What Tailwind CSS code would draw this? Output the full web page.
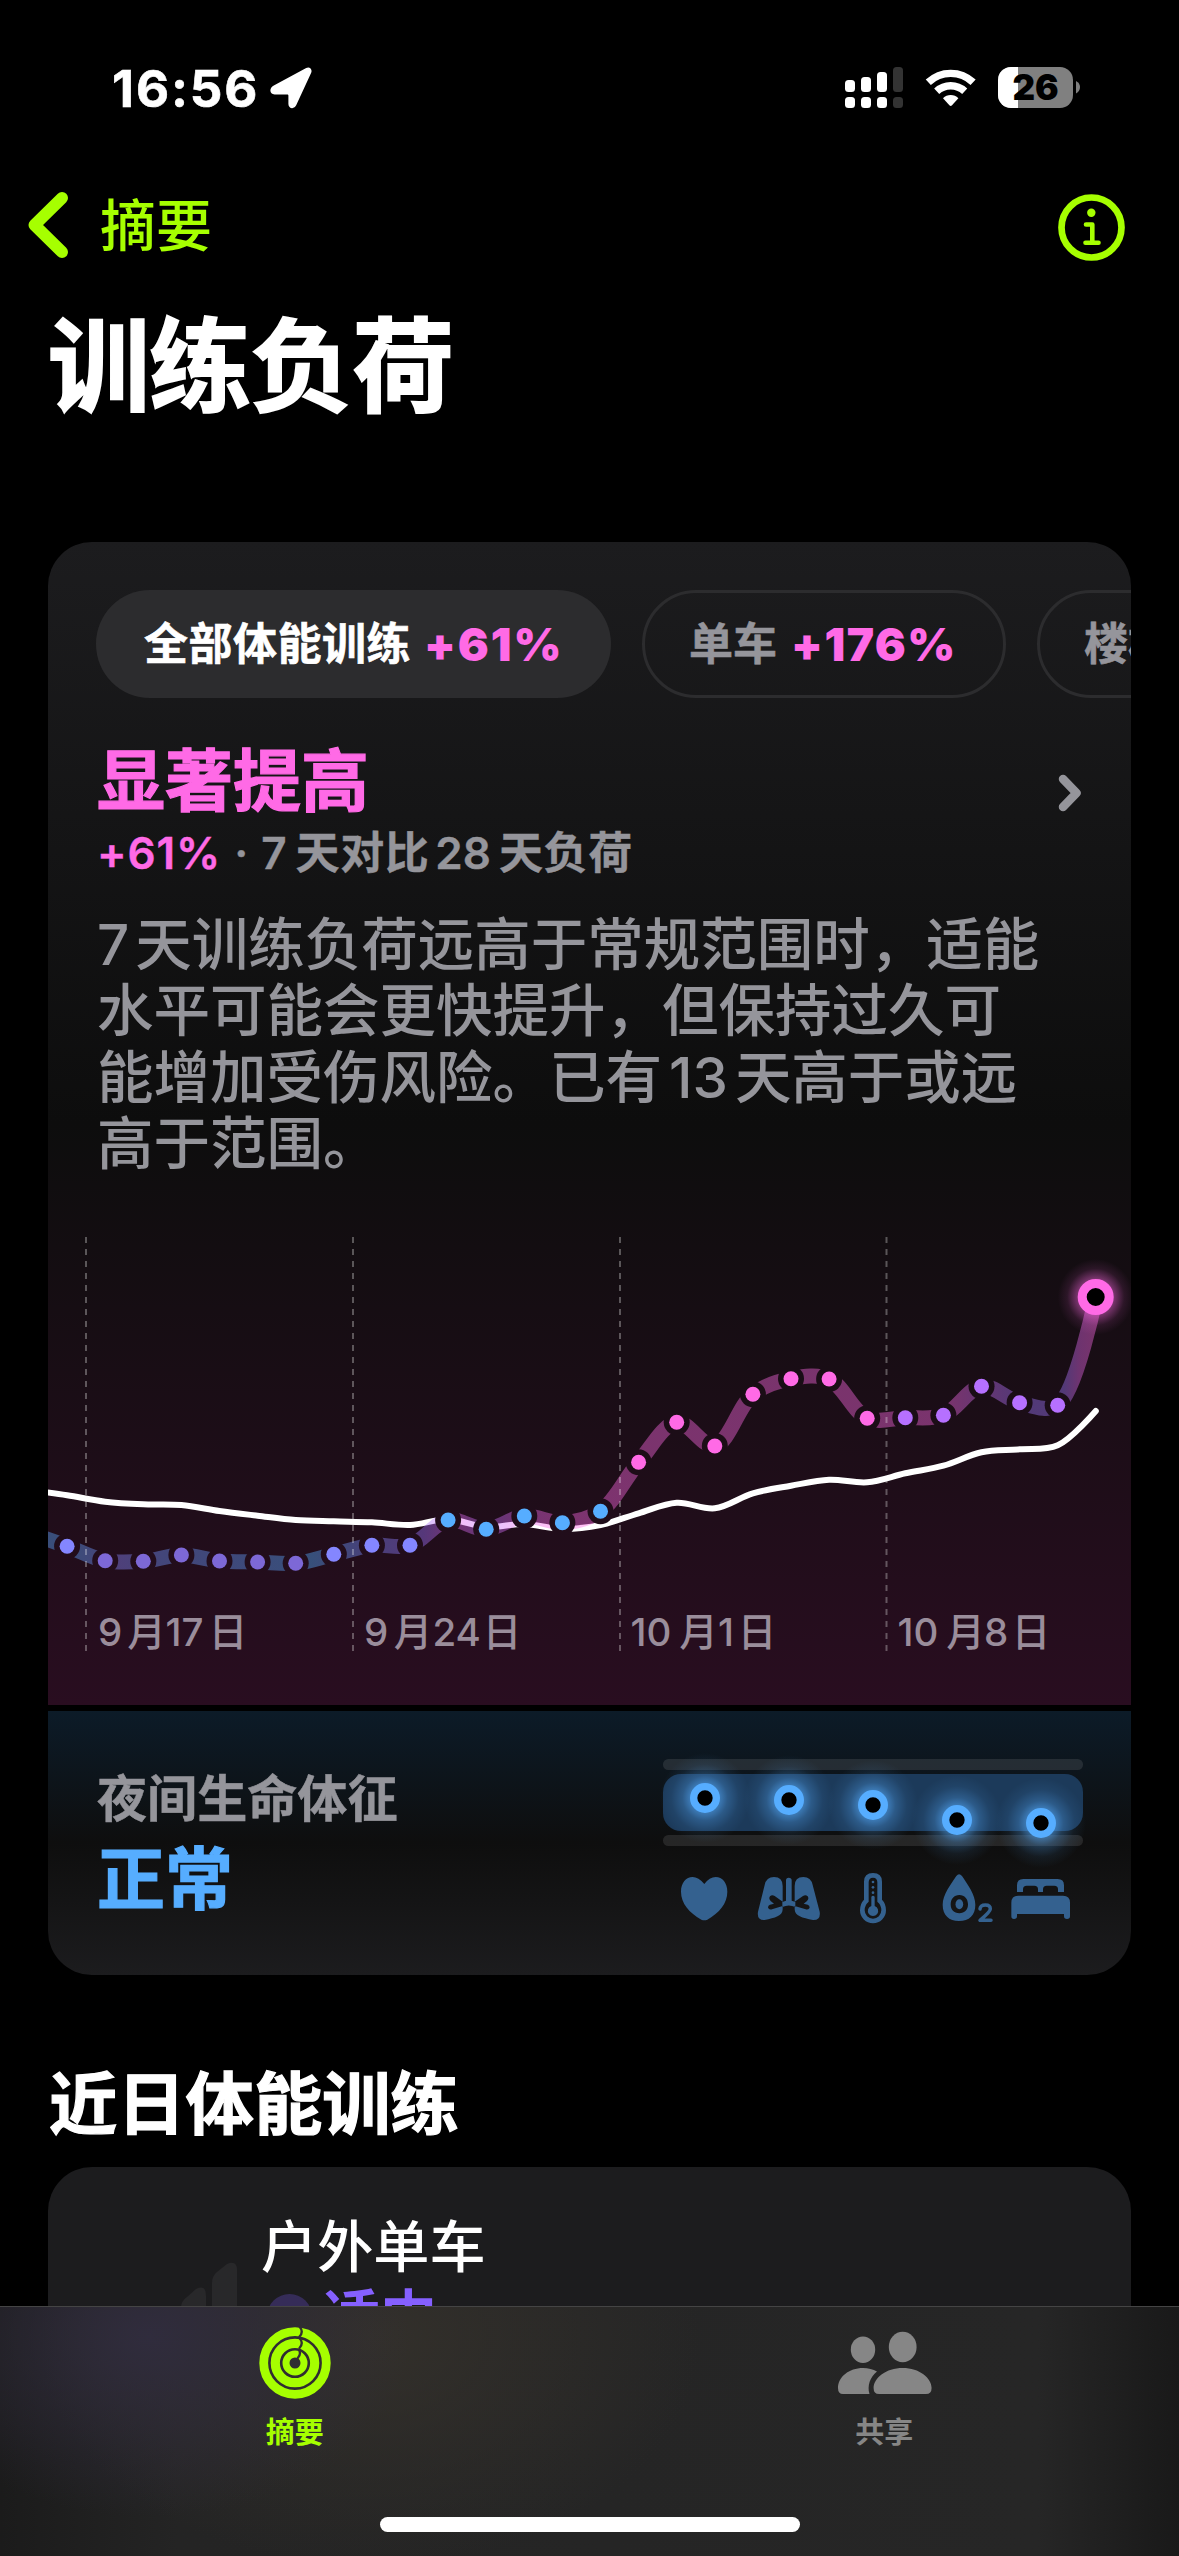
<!DOCTYPE html>
<html lang="zh-CN">
<head>
<meta charset="utf-8">
<title>训练负荷</title>
<script src="https://cdn.jsdelivr.net/npm/@tailwindcss/browser@4"></script>
</head>
<body class="bg-black">
<div class="relative flex h-[2556px] w-[1179px] flex-col overflow-hidden bg-black font-['Inter','Noto_Sans_CJK_SC',sans-serif] text-white">

  <!-- Status bar -->
  <div class="flex h-[176px] shrink-0 items-center pl-[112px] pr-[98px]">
    <span class="w-[158px] whitespace-nowrap text-[51px] font-bold leading-none tracking-[1.900px] [-webkit-text-stroke:0.6px]">16:56</span>
    <svg class="h-[42px] w-[42px]" viewBox="0 0 42 42" fill="#fff"><path d="M36.200.900 3.800 18.400C-1.300 21.200-.400 27.400 4.600 27.400H17.200C18 27.400 18.400 27.800 18.400 28.600V37C18.400 42 24.500 42.600 26.300 38.100L41.200 5.800C42.600 2.300 39.600-.900 36.200.900Z"/></svg>
    <svg class="ml-auto h-[42px] w-[236px]" viewBox="846 67 236 42">
      <g fill="#fff"><rect x="846" y="80" width="10" height="12" rx="3.500"/><rect x="862" y="77" width="10" height="15" rx="3.500"/><rect x="878" y="72" width="10" height="20" rx="3.500"/><rect x="846" y="97" width="10" height="11" rx="3.500"/><rect x="862" y="97" width="10" height="11" rx="3.500"/><rect x="878" y="97" width="10" height="11" rx="3.500"/></g>
      <g fill="#333"><rect x="894" y="67" width="10" height="25" rx="3.500"/><rect x="894" y="97" width="10" height="11" rx="3.500"/></g>
      <g fill="none" stroke="#fff" stroke-width="7.400"><path d="M929.300 82.300A32.500 32.500 0 0 1 974.100 82.300"/><path d="M937.700 91.300A20.500 20.500 0 0 1 965.700 91.300"/></g>
      <path fill="#fff" d="M944 98.200A11 11 0 0 1 959.400 98.200L953 105.300Q951.700 106.600 950.400 105.300Z"/>
      <clipPath id="bat"><rect x="999" y="67" width="75" height="41" rx="13"/></clipPath>
      <g clip-path="url(#bat)"><rect x="999" y="67" width="75" height="41" fill="#808080"/><rect x="999" y="67" width="20" height="41" fill="#fff"/></g>
      <path fill="#808080" d="M1077 81Q1081 83 1081 87T1077 93.500Z"/>
      <text x="1036.500" y="100.300" text-anchor="middle" class="text-[35px] font-black" fill="#000">26</text>
    </svg>
  </div>

  <!-- Navigation -->
  <div class="flex h-[98px] shrink-0 items-center pl-[28px] pr-[54px] text-[#a6ff00]">
    <svg class="h-[68px] w-[40px]" viewBox="0 0 40 68" fill="none" stroke="currentColor" stroke-width="12" stroke-linecap="round" stroke-linejoin="round"><path d="M34 7 6.500 34 34 61"/></svg>
    <span class="ml-[32px] mt-[2px] text-[56px] font-medium leading-none">摘要</span>
    <svg class="ml-auto mt-[5px] h-[67px] w-[67px]" viewBox="0 0 67 67"><circle cx="33.500" cy="33.500" r="30" fill="none" stroke="currentColor" stroke-width="6.700"/><circle cx="33.300" cy="18.800" r="4.200" fill="currentColor"/><path d="M28 30.500h6.300v18.300M27.500 48.800h13" fill="none" stroke="currentColor" stroke-width="4.600" stroke-linecap="round" stroke-linejoin="round"/></svg>
  </div>

  <h1 class="h-[181px] shrink-0 pl-[48px] pt-[3px] text-[102px] font-bold leading-[181px] tracking-[-0.700px] [-webkit-text-stroke:1.8px]">训练负荷</h1>

  <!-- Training load card -->
  <section class="mx-[48px] mt-[87px] flex h-[1163px] w-[1083px] shrink-0 flex-col overflow-hidden rounded-t-[44px] bg-[linear-gradient(180deg,#1c1c1e_0%,#0d0d0d_50%,#290d20_100%)]">
    <div class="flex shrink-0 gap-[31px] whitespace-nowrap pl-[48px] pt-[48px] text-[44px] font-bold leading-none">
      <div class="flex h-[108px] w-[515px] shrink-0 items-center gap-[13px] rounded-full bg-[#2c2c2e] pl-[48px]"><span class="tracking-[0.500px] [-webkit-text-stroke:0.6px]">全部体能训练</span><span class="text-[46px] font-black tracking-[1.900px] text-[#ff6ae6]">+61%</span></div>
      <div class="flex h-[108px] w-[364px] shrink-0 items-center gap-[14px] rounded-full border-[3px] border-[#2c2c2e] pl-[44px]"><span class="text-[#95959b] [-webkit-text-stroke:0.6px]">单车</span><span class="text-[46px] font-black tracking-[1.500px] text-[#ff6ae6]">+176%</span></div>
      <div class="flex h-[108px] w-[364px] shrink-0 items-center rounded-full border-[3px] border-[#2c2c2e] pl-[44px] text-[#95959b]"><span class="[-webkit-text-stroke:0.6px]">楼梯</span></div>
    </div>
    <div class="mt-[40px] flex h-[148px] shrink-0 items-center justify-between pl-[49px] pr-[49px]">
      <div>
        <h2 class="h-[82px] pt-[2px] text-[68px] font-bold leading-[82px] text-[#ff6ae6] [-webkit-text-stroke:1.2px]">显著提高</h2>
        <p class="flex h-[66px] items-center whitespace-nowrap text-[44px] font-semibold leading-[68px] text-[#95959b] [-webkit-text-stroke:0.4px]"><span class="tracking-[0.900px] text-[#ff6ae6]">+61%</span><span class="mx-[13px]">·</span><span>7</span><span class="ml-[9px] tracking-[0.600px]">天对比</span><span class="ml-[6px]">28</span><span class="ml-[8px] tracking-[0.600px]">天负荷</span></p>
      </div>
      <svg class="mb-[39px] h-[38px] w-[24px]" viewBox="0 0 24 38" fill="none" stroke="#95959b" stroke-width="8.500" stroke-linecap="round" stroke-linejoin="round"><path d="M5 5 18.500 19 5 33"/></svg>
    </div>
    <p class="mt-[26px] h-[263px] shrink-0 whitespace-nowrap pl-[49px] text-[56.500px] font-medium leading-[66.400px] text-[#95959b]">7<span class="ml-[6px]">天训练负荷远高于常规范围时，适能</span><br>水平可能会更快提升，但保持过久可<br>能增加受伤风险。已有<span class="ml-[7px] mr-[7px]">13</span>天高于或远<br>高于范围。</p>

    <!-- Chart -->
    <svg class="h-[530px] w-[1083px] shrink-0" viewBox="48 1175 1083 530">
      <defs>
        <linearGradient id="load" gradientUnits="userSpaceOnUse" x1="29" y1="0" x2="1095.700" y2="0">
          <stop offset="0" stop-color="#56adff"/><stop offset=".045" stop-color="#62a4ff"/><stop offset=".085" stop-color="#8c88ff"/><stop offset=".125" stop-color="#7296ff"/><stop offset=".2" stop-color="#659fff"/><stop offset=".265" stop-color="#56adff"/><stop offset=".32" stop-color="#8088ff"/><stop offset=".37" stop-color="#a074ff"/><stop offset=".4" stop-color="#e86aee"/><stop offset=".43" stop-color="#c070ff"/><stop offset=".46" stop-color="#e86aee"/><stop offset=".5" stop-color="#ff6ae6"/><stop offset=".86" stop-color="#ff6ae6"/><stop offset=".9" stop-color="#c870f8"/><stop offset=".93" stop-color="#a078ff"/><stop offset=".97" stop-color="#a078ff"/><stop offset=".985" stop-color="#e86aee"/><stop offset="1" stop-color="#ff6ae6"/>
        </linearGradient>
        <mask id="halo" maskUnits="userSpaceOnUse" x="0" y="1175" width="1179" height="530"><rect y="1175" width="1179" height="530" fill="#fff"/><g id="holes"></g></mask>
        <radialGradient id="pinkGlow"><stop offset=".3" stop-color="#ff6ae6" stop-opacity=".75"/><stop offset=".5" stop-color="#ff6ae6" stop-opacity=".4"/><stop offset=".75" stop-color="#ff6ae6" stop-opacity=".1"/><stop offset="1" stop-color="#ff6ae6" stop-opacity="0"/></radialGradient>
      </defs>
      <g mask="url(#halo)" fill="none">
        <path id="base" stroke="#fff" stroke-width="6" stroke-linecap="round"/>
        <path id="band" stroke="url(#load)" stroke-width="15" stroke-opacity=".42"/>
      </g>
      <g stroke="#fff" stroke-opacity=".3" stroke-width="2" stroke-dasharray="6 6"><path d="M86 1237V1651M353 1237V1651M620 1237V1651M886.500 1237V1651"/></g>
      <g id="dots"></g>
      <circle cx="1095.700" cy="1297" r="38" fill="url(#pinkGlow)"/>
      <circle cx="1095.700" cy="1297" r="13.500" fill="#000" stroke="#ff6ae6" stroke-width="9"/>
      <g class="text-[38.500px] font-medium" fill="#9a8d9b">
        <text y="1646.300"><tspan x="98">9</tspan><tspan x="127.200">月</tspan><tspan x="165.500">17</tspan><tspan x="208.700">日</tspan></text>
        <text y="1646.300"><tspan x="364">9</tspan><tspan x="393.700">月</tspan><tspan x="432.500">24</tspan><tspan x="482.700">日</tspan></text>
        <text y="1646.300"><tspan x="630.500">10</tspan><tspan x="679.200">月</tspan><tspan x="718">1</tspan><tspan x="737.700">日</tspan></text>
        <text y="1646.300"><tspan x="897.500">10</tspan><tspan x="946.200">月</tspan><tspan x="984">8</tspan><tspan x="1011.700">日</tspan></text>
      </g>
    </svg>
  </section>

  <!-- Overnight vitals -->
  <section class="mx-[48px] mt-[6px] flex h-[264px] w-[1083px] shrink-0 justify-between overflow-hidden rounded-b-[44px] bg-[linear-gradient(180deg,#0c1b28_0%,#0e0e0e_50%,#1c1c1e_100%)] pl-[49px] pr-[48px]">
    <div class="pt-[55px]">
      <p class="h-[66px] text-[50.100px] font-bold leading-[66px] text-[#95959b] [-webkit-text-stroke:0.5px]">夜间生命体征</p>
      <p class="h-[93px] text-[68px] font-bold leading-[94px] text-[#56adff] [-webkit-text-stroke:1.2px]">正常</p>
    </div>
    <svg class="mt-[39px] h-[180px] w-[420px] overflow-visible" viewBox="69 60 1260 540">
      <defs><radialGradient id="blueGlow"><stop offset=".3" stop-color="#56adff" stop-opacity=".6"/><stop offset=".5" stop-color="#56adff" stop-opacity=".28"/><stop offset=".75" stop-color="#56adff" stop-opacity=".08"/><stop offset="1" stop-color="#56adff" stop-opacity="0"/></radialGradient></defs>
      <rect x="69" y="87" width="1260" height="33" rx="16" fill="#fff" fill-opacity=".1"/>
      <rect x="69" y="132" width="1260" height="171" rx="54" fill="#1c3a5a"/>
      <rect x="69" y="315" width="1260" height="33" rx="16" fill="#fff" fill-opacity=".1"/>
      <g fill="url(#blueGlow)"><circle cx="195" cy="204" r="135"/><circle cx="447" cy="210" r="135"/><circle cx="699" cy="225" r="135"/><circle cx="951" cy="270" r="135"/><circle cx="1203" cy="279" r="135"/></g>
      <g fill="#000" stroke="#56adff" stroke-width="22"><circle cx="195" cy="204" r="34"/><circle cx="447" cy="210" r="34"/><circle cx="699" cy="225" r="34"/><circle cx="951" cy="270" r="34"/><circle cx="1203" cy="279" r="34"/></g>
      <g fill="#34618f">
        <path d="M193 462C182 448 169 441 158 441C138 441 123 459 123 485C123 520 148 548 184 569Q193 573 202 569C238 548 262 520 262 485C262 459 247 441 227 441C215 441 203 448 193 462Z"/>
        <path fill-rule="evenodd" d="M374 465Q379 441 402 441Q428 441 428 468V515L404 498Q396 493 390 499Q385 506 392 513L402 521L390 524Q382 528 385 535Q389 540 396 538L428 528V538C428 558 405 564 374 570Q350 571 354 545ZM518 465Q513 441 490 441Q464 441 464 468V515L489 498Q497 493 503 499Q508 506 501 513L491 521L503 524Q511 528 508 535Q504 540 497 538L464 528V538C464 558 487 564 519 570Q543 571 539 545ZM438 451Q438 443 446 443Q455 443 455 451V512L466 516V531Q446 522 427 531V516L438 512Z"/>
        <path fill-rule="evenodd" d="M672 455Q672 429 699 429Q726 429 726 455V509Q738 521 738 541A39 39 0 0 1 660 541Q660 521 672 509ZM686 457V515Q674 524 674 541A25 25 0 0 0 724 541Q724 524 712 515V457Q712 443 699 443Q686 443 686 457ZM694 500Q699 495 704 500V528A15.500 15.500 0 1 1 694 528Z"/>
        <circle cx="699" cy="456" r="4"/><circle cx="699" cy="472" r="4"/><circle cx="699" cy="488" r="4"/>
        <path fill-rule="evenodd" d="M949 438Q957 428 966 438C983 463 1006 495 1006 524C1006 555 988 573 957 573C927 573 908 555 908 524C908 495 932 463 949 438ZM958 495C942 495 932 507 932 523S942 550 958 550S984 539 984 523S974 495 958 495Z"/>
        <ellipse cx="958" cy="523" rx="11.500" ry="15"/>
        <path d="M1020 537Q1021 525 1036 525Q1051 525 1051 537Q1051 545 1020 571H1053" fill="none" stroke="#34618f" stroke-width="10.500" stroke-linecap="round" stroke-linejoin="round"/>
        <path d="M1131 486V466Q1131 447 1150 447H1253Q1272 447 1272 466V486H1254V478Q1254 467 1243 467H1220Q1209 467 1209 478V486H1194V478Q1194 467 1183 467H1160Q1149 467 1149 478V486ZM1114 518Q1114 497 1135 497H1269Q1290 497 1290 518V559Q1290 567 1281 567Q1272 567 1272 559V552H1131V559Q1131 567 1122 567Q1114 567 1114 559Z"/>
      </g>
    </svg>
  </section>

  <h2 class="h-[192px] shrink-0 pl-[49px] pt-[65px] text-[68.300px] font-bold leading-[128px] [-webkit-text-stroke:1.2px]">近日体能训练</h2>

  <!-- Recent workouts -->
  <section class="mx-[48px] flex h-[400px] w-[1083px] shrink-0 rounded-t-[44px] bg-[#1c1c1e]">
    <svg class="ml-[132px] mt-[94px] h-[160px] w-[60px] shrink-0" viewBox="0 0 60 160" fill="#28282a"><path d="M1 47Q1 40 7 36L16 28Q26 23 26 35V160H1ZM32 22Q32 15 37 11L47 3Q57-1 57 9V160H32Z"/></svg>
    <div class="ml-[21px] pt-[46px] leading-[69px]">
      <p class="text-[56.200px] font-medium">户外单车</p>
      <p class="flex items-center gap-[11px] pl-[6px] text-[57px] font-bold text-[#8560ff]"><svg class="h-[45px] w-[45px]" viewBox="0 0 45 45"><circle cx="22.500" cy="22.500" r="22.500" fill="#352c58"/><circle cx="22.500" cy="22.500" r="8" fill="#8560ff"/></svg>适中</p>
    </div>
  </section>

  <!-- Tab bar -->
  <nav class="absolute inset-x-0 bottom-0 h-[250px] border-t border-[#444] bg-[#252525] bg-[radial-gradient(260px_180px_at_150px_30px,#302c3d_0%,#302c3d00_100%),radial-gradient(330px_230px_at_370px_30px,#33302b_0%,#33302b00_100%),linear-gradient(90deg,#1b1b1b_0%,#242424_15%,#262626_88%,#191919_100%)]">
    <div class="grid grid-cols-2 pt-[20px] text-center text-[29px] font-semibold leading-none">
      <div class="flex flex-col items-center text-[#a6ff00]">
        <svg class="h-[72px] w-[72px]" viewBox="-36 -36 72 72" fill="none" stroke="currentColor" stroke-linecap="round">
          <circle r="31.300" stroke-width="8.800"/><circle r="19.700" stroke-width="9.200"/><circle r="9" stroke-width="7"/>
          <path d="M4.500-36.500Q9-31 4.500-26.500M4.500-25Q9-20 4.500-15M4-13Q6.500-9 2.500-4.500" stroke="#312e31" stroke-width="2.300"/>
        </svg>
        <span class="mt-[19px]">摘要</span>
      </div>
      <div class="flex flex-col items-center text-[#868686]">
        <svg class="h-[72px] w-[96px]" viewBox="836 2327 96 72" fill="currentColor"><ellipse cx="863" cy="2349.700" rx="12.200" ry="13.200"/><ellipse cx="902.700" cy="2347" rx="13.900" ry="15.200"/><path d="M838 2388C838 2377 849 2368 863 2368Q871 2368 877 2371.500C870 2377 867 2386 869.500 2394H843Q838 2394 838 2388ZM873.600 2388C873.600 2378 886 2368 902.700 2368S931.600 2378 931.600 2388Q931.600 2394 926 2394H879Q873.600 2394 873.600 2388Z"/></svg>
        <span class="mt-[19px]">共享</span>
      </div>
    </div>
    <div class="absolute bottom-[24px] left-[380px] h-[15px] w-[420px] rounded-full bg-white"></div>
  </nav>
</div>

<script>
  const x = i => 67.1 + 38.1 * i;
  // Daily values from the day before the visible range up to today
  const load = [1533,1546.3,1560.7,1561.3,1555,1561,1562,1563.3,1554.3,1545.3,1545.3,1520,1529.3,1516,1522.7,1511.3,1462.3,1422.3,1446,1394.3,1378.7,1379,1418.3,1417.7,1415.3,1386.3,1402.7,1405.3,1297];
  const base = [1490,1495.3,1501.7,1504.3,1505,1511,1515.7,1520,1521.3,1522.3,1525,1519.3,1527,1524,1529,1525,1513.3,1502.7,1508.3,1493.3,1485.7,1479.7,1482.3,1473.3,1465.7,1452.3,1449.3,1445.3,1411];
  // Centripetal Catmull-Rom spline as cubic segments
  function spline(ys) {
    const p = ys.map((y, i) => [x(i - 1), y]);
    let d = `M${p[0]}`;
    for (let i = 0; i < p.length - 1; i++) {
      const a = p[i - 1] || p[i], b = p[i], c = p[i + 1], e = p[i + 2] || c;
      const q = (u, v) => Math.sqrt(Math.hypot(u[0] - v[0], u[1] - v[1]));
      const l1 = q(a, b), l2 = q(b, c), l3 = q(c, e);
      const c1 = [0, 1].map(k => l1 ? (b[k] * (2*l1*l1 + 3*l1*l2 + l2*l2) - a[k]*l2*l2 + c[k]*l1*l1) / (3*l1*(l1 + l2)) : b[k]);
      const c2 = [0, 1].map(k => l3 ? (c[k] * (2*l3*l3 + 3*l3*l2 + l2*l2) + b[k]*l3*l3 - e[k]*l2*l2) / (3*l3*(l3 + l2)) : c[k]);
      d += `C${c1} ${c2} ${c}`;
    }
    return d;
  }
  document.getElementById('band').setAttribute('d', spline(load));
  document.getElementById('base').setAttribute('d', spline(base));
  const color = i => i === 0 || (i > 6 && i < 10) ? '#8486ff' : i < 7 ? '#7d68d6' : i < 15 ? '#56adff' : i < 22 ? '#ff6ae6' : '#b670ff';
  let dots = '', holes = '';
  load.slice(1, -1).forEach((y, i) => {
    dots += `<circle cx="${x(i)}" cy="${y}" r="7.5" fill="${color(i)}"/>`;
    holes += `<circle cx="${x(i)}" cy="${y}" r="13" fill="#000"/>`;
  });
  document.getElementById('dots').innerHTML = dots;
  document.getElementById('holes').innerHTML = holes;
</script>
</body>
</html>
